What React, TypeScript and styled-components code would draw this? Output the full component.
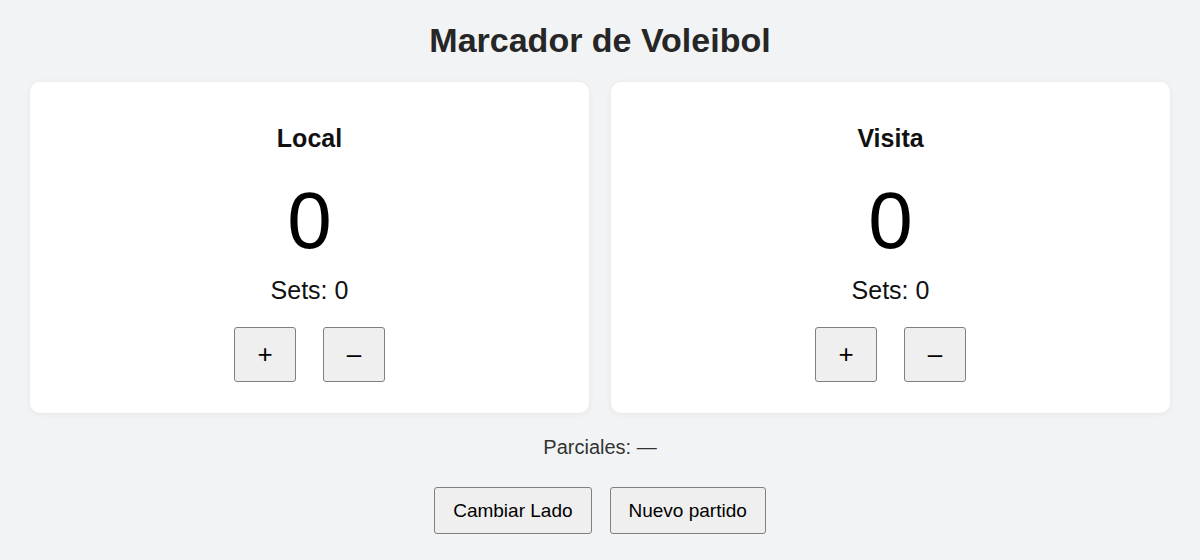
import React, { useState } from 'react'
import styled, { createGlobalStyle } from 'styled-components'

const GlobalStyle = createGlobalStyle`
  html, body {
    margin: 0;
    padding: 0;
    background: #f2f3f5;
    font-family: "Liberation Sans", Arial, Helvetica, sans-serif;
  }
`

const Page = styled.div`
  display: flex;
  flex-direction: column;
  align-items: center;
  padding: 21px 30px 24px;
`

const Title = styled.h1`
  margin: 0 0 22px;
  font-size: 34px;
  line-height: 39px;
  font-weight: 700;
  color: #262626;
`

const Board = styled.div`
  display: grid;
  grid-template-columns: 1fr 1fr;
  gap: 22px;
  width: 100%;
`

const Card = styled.section`
  display: flex;
  flex-direction: column;
  align-items: center;
  height: 331px;
  box-sizing: border-box;
  padding-top: 42px;
  background: #fff;
  border-radius: 10px;
  box-shadow: 0 1px 6px rgba(0, 0, 0, 0.06);
`

const TeamName = styled.h2`
  margin: 0;
  font-size: 25px;
  line-height: 29px;
  font-weight: 700;
  color: #111;
`

const Score = styled.div`
  margin-top: 28px;
  font-size: 80px;
  line-height: 80px;
  color: #000;
`

const Sets = styled.div`
  margin-top: 15px;
  font-size: 25px;
  line-height: 29px;
  color: #111;
`

const Controls = styled.div`
  display: flex;
  gap: 27px;
  margin-top: 22px;
`

const Button = styled.button<{ $size?: 'square' | 'wide' }>`
  box-sizing: border-box;
  font-family: inherit;
  color: #000;
  background: #efefef;
  border: 1px solid #808080;
  border-radius: 3px;
  cursor: pointer;
  ${(p) =>
    p.$size === 'square'
      ? `
    width: 62px;
    height: 55px;
    padding: 0;
    font-size: 26px;
  `
      : `
    height: 47px;
    padding: 0 18px;
    font-size: 19px;
  `}

  &:hover {
    background: #e5e5e5;
  }
`

const Partials = styled.p`
  margin: 23px 0 28px;
  font-size: 20px;
  line-height: 23px;
  color: #333;
`

const Actions = styled.div`
  display: flex;
  gap: 18px;
`

type Team = { name: string; points: number; sets: number }

const freshTeams = (): Team[] => [
  { name: 'Local', points: 0, sets: 0 },
  { name: 'Visita', points: 0, sets: 0 },
]

const App = () => {
  const [teams, setTeams] = useState<Team[]>(freshTeams)
  const [partials, setPartials] = useState<string[]>([])

  const change = (i: number, delta: number) =>
    setTeams((t) =>
      t.map((team, j) => (j === i ? { ...team, points: Math.max(0, team.points + delta) } : team))
    )

  const swap = () => setTeams((t) => [t[1], t[0]])

  const reset = () => {
    setTeams(freshTeams())
    setPartials([])
  }

  return (
    <>
      <GlobalStyle />
      <Page>
        <Title>Marcador de Voleibol</Title>
        <Board>
          {teams.map((team, i) => (
            <Card key={team.name}>
              <TeamName>{team.name}</TeamName>
              <Score>{team.points}</Score>
              <Sets>Sets: {team.sets}</Sets>
              <Controls>
                <Button $size="square" onClick={() => change(i, 1)}>+</Button>
                <Button $size="square" onClick={() => change(i, -1)}>–</Button>
              </Controls>
            </Card>
          ))}
        </Board>
        <Partials>Parciales: {partials.length ? partials.join(', ') : '—'}</Partials>
        <Actions>
          <Button onClick={swap}>Cambiar Lado</Button>
          <Button onClick={reset}>Nuevo partido</Button>
        </Actions>
      </Page>
    </>
  )
}

export default App
